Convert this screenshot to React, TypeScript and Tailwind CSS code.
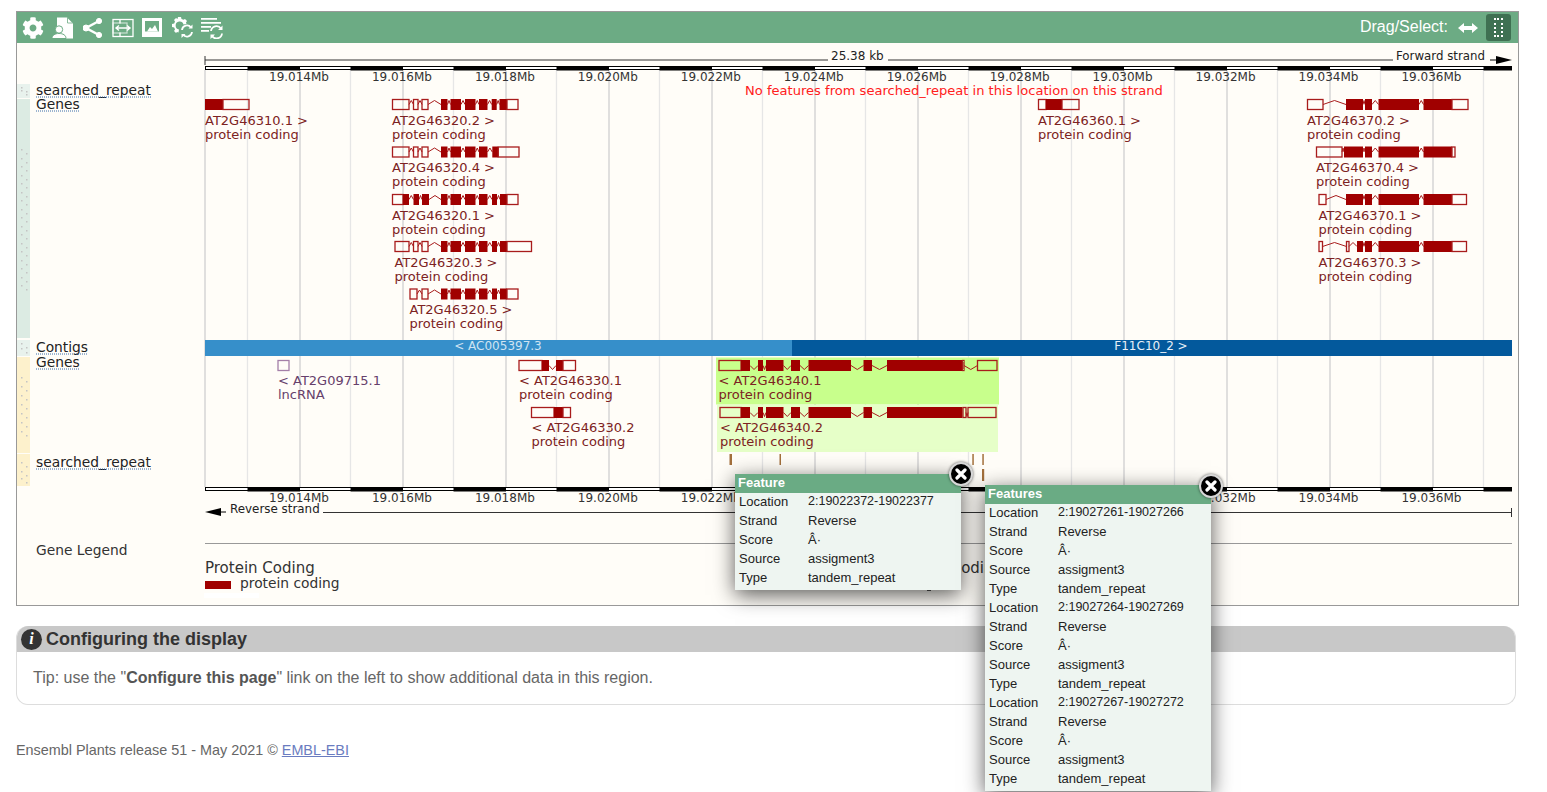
import { FaCog } from 'react-icons/fa'

type Exon = [number, number, 0 | 1]

type Gene = {
    y: number
    labelX: number
    name: string
    biotype: string
    exons: Exon[]
    reverse?: boolean
    color?: string
    stroke?: string
}

const tailF: Exon[] = [[441, 447.5, 1], [450.5, 461, 1], [465, 475.5, 1], [479, 487.5, 1]]
const tail370: Exon[] = [[1365, 1372, 1], [1378.5, 1419, 1], [1423.5, 1452, 1]]
const body340: Exon[] = [[741, 750, 1], [758, 763, 1], [766, 783.5, 1], [791, 800, 1], [808.5, 851, 1], [863.5, 872, 1], [887, 962.5, 1]]

const genes: Gene[] = [
    { y: 99.5, labelX: 205, name: 'AT2G46310.1 >', biotype: 'protein coding', exons: [[205, 223, 1], [223, 249, 0]] },
    { y: 99.5, labelX: 392, name: 'AT2G46320.2 >', biotype: 'protein coding', exons: [[392.5, 409, 0], [413.5, 418, 0], [422, 428, 0], ...tailF, [491.7, 496.7, 1], [499.5, 507, 1], [507, 518, 0]] },
    { y: 147, labelX: 392, name: 'AT2G46320.4 >', biotype: 'protein coding', exons: [[392.5, 409, 0], [413.5, 418, 0], [422, 428, 0], ...tailF, [492.3, 498.3, 1], [498.3, 519, 0]] },
    { y: 194.5, labelX: 392, name: 'AT2G46320.1 >', biotype: 'protein coding', exons: [[392.5, 403, 0], [403, 409, 1], [413.5, 419, 1], [422, 429, 1], ...tailF, [492, 497, 1], [500, 507, 1], [507, 518, 0]] },
    { y: 241.5, labelX: 394.5, name: 'AT2G46320.3 >', biotype: 'protein coding', exons: [[395, 409, 0], [413.5, 418, 0], [422, 428, 0], ...tailF, [492, 497, 1], [500, 507, 1], [507, 531.5, 0]] },
    { y: 289, labelX: 409.5, name: 'AT2G46320.5 >', biotype: 'protein coding', exons: [[410, 417, 0], [422, 428, 0], ...tailF, [492, 497, 1], [500, 507, 1], [507, 518, 0]] },
    { y: 99.5, labelX: 1038, name: 'AT2G46360.1 >', biotype: 'protein coding', exons: [[1038.5, 1046, 0], [1046, 1062, 1], [1062, 1079, 0]] },
    { y: 99.5, labelX: 1307, name: 'AT2G46370.2 >', biotype: 'protein coding', exons: [[1307.5, 1323, 0], [1346, 1363, 1], ...tail370, [1452, 1468, 0]] },
    { y: 147, labelX: 1316, name: 'AT2G46370.4 >', biotype: 'protein coding', exons: [[1316.5, 1342, 0], [1344, 1363, 1], ...tail370, [1452, 1455, 0]] },
    { y: 194.5, labelX: 1318.5, name: 'AT2G46370.1 >', biotype: 'protein coding', exons: [[1319, 1326, 0], [1346, 1363, 1], ...tail370, [1452, 1466.5, 0]] },
    { y: 241.5, labelX: 1318.5, name: 'AT2G46370.3 >', biotype: 'protein coding', exons: [[1319, 1322.5, 0], [1346.5, 1349, 0], [1357, 1363, 1], ...tail370, [1452, 1466.5, 0]] },
    { y: 360.5, labelX: 278, name: '< AT2G09715.1', biotype: 'lncRNA', reverse: true, color: '#66406b', stroke: '#a47fa8', exons: [[278, 289, 0]] },
    { y: 360.5, labelX: 519, name: '< AT2G46330.1', biotype: 'protein coding', reverse: true, exons: [[519, 542, 0], [542, 549, 1], [556, 563, 1], [563, 575.5, 0]] },
    { y: 407.5, labelX: 531.5, name: '< AT2G46330.2', biotype: 'protein coding', reverse: true, exons: [[531.5, 554, 0], [554, 563, 1], [563, 570.5, 0]] },
    { y: 360.5, labelX: 718.5, name: '< AT2G46340.1', biotype: 'protein coding', reverse: true, exons: [[719, 741, 0], ...body340, [962.5, 964, 0], [977.5, 997, 0]] },
    { y: 407.5, labelX: 720, name: '< AT2G46340.2', biotype: 'protein coding', reverse: true, exons: [[720, 741, 0], ...body340, [963, 966, 0], [968, 996, 0]] }
]

const ticks = Array.from({ length: 25 }, (_, i) => {
    const k = i - 1
    const x = 300 + 51.5 * k
    return { x: k % 2 === 0 ? x : x - 1, major: k % 2 === 0 }
})

const mbLabels = ['19.014Mb', '19.016Mb', '19.018Mb', '19.020Mb', '19.022Mb', '19.024Mb', '19.026Mb', '19.028Mb', '19.030Mb', '19.032Mb', '19.034Mb', '19.036Mb']

const trackLabels = [
    { text: 'searched_repeat', y: 95, width: 115 },
    { text: 'Genes', y: 109, width: 43 },
    { text: 'Contigs', y: 352, width: 52 },
    { text: 'Genes', y: 367, width: 43 },
    { text: 'searched_repeat', y: 467, width: 115 }
]

const handles = [
    { y: 84, h: 14, fill: '#e8f2ed', dots: [87, 90] },
    { y: 99, h: 239, fill: '#dcebe3', dots: [149, 158, 166, 175, 183, 192, 200, 209, 217, 226, 234, 243, 251, 260, 268, 277, 285] },
    { y: 340, h: 16, fill: '#e8f2ed', dots: [343, 348] },
    { y: 357, h: 96, fill: '#fdf1cc', dots: [377, 386, 395, 404, 413, 422, 431] },
    { y: 454, h: 32, fill: '#fdf1cc', dots: [462, 471, 478] }
]

const GeneGlyph = ({ gene }: { gene: Gene }) => {
    const stroke = gene.stroke ?? '#a81c1c'
    const textY = gene.reverse ? gene.y + 24 : gene.y + 25
    const introns = gene.exons.slice(1).map((exon, i) => {
        const from = gene.exons[i][1]
        const to = exon[0]
        if (to - from < 2) return null
        const mid = (from + to) / 2
        const apex = gene.reverse ? gene.y + 9 : gene.y + 1
        return <polyline key={i} points={`${from},${gene.y + 5} ${mid},${apex} ${to},${gene.y + 5}`} fill="none" stroke={stroke} strokeWidth="1" />
    })
    return (
        <g>
            {introns}
            {gene.exons.map(([a, b, solid], i) =>
                solid ? (
                    <rect key={i} x={a} y={gene.y - 0.5} width={b - a} height={11} fill="#a00000" />
                ) : (
                    <rect key={i} x={a} y={gene.y} width={b - a} height={10} fill="none" stroke={stroke} strokeWidth="1.3" />
                )
            )}
            <text x={gene.labelX} y={textY} fontSize="13" fill={gene.color ?? '#7c2222'}>{gene.name}</text>
            <text x={gene.labelX} y={textY + 14} fontSize="13" fill={gene.color ?? '#7c2222'}>{gene.biotype}</text>
        </g>
    )
}

const ScaleBar = ({ y }: { y: number }) => (
    <g>
        <rect x="205.5" y={y + 0.5} width="1306" height="3" fill="#fff" stroke="#000" strokeWidth="1" />
        {ticks.filter((t) => !t.major).map((t, i) => {
            const end = Math.min(t.x + 52.5, 1512)
            return <rect key={i} x={t.x} y={y} width={end - t.x} height="4.500" fill="#000" />
        })}
    </g>
)

const GenomeImage = () => (
    <svg viewBox="17 43 1501 562" width="1501" height="562" className="block" style={{ fontFamily: '"DejaVu Sans", sans-serif' }}>
        {handles.map((h) => (
            <g key={h.y}>
                <rect x="17" y={h.y} width="13" height={h.h} fill={h.fill} />
                {h.dots.map((d) => (
                    <g key={d}>
                        <rect x="21" y={d} width="1.500" height="1.500" fill="#c4c4c4" />
                        <rect x="26" y={d + 4} width="1.500" height="1.500" fill="#c4c4c4" />
                    </g>
                ))}
            </g>
        ))}

        {ticks.map((t) => (
            <line key={t.x} x1={t.x} x2={t.x} y1="70" y2="487" stroke={t.major ? '#cfcfcf' : '#e6e6e6'} strokeWidth="1.300" />
        ))}
        <line x1="205" x2="205" y1="70" y2="487" stroke="#cfcfcf" strokeWidth="1.300" />

        {/* top ruler */}
        <line x1="205" x2="828" y1="60" y2="60" stroke="#333" />
        <line x1="888" x2="1393" y1="60" y2="60" stroke="#333" />
        <line x1="205" x2="205" y1="56" y2="65" stroke="#333" />
        <text x="831" y="60" fontSize="12" fill="#222">25.38 kb</text>
        <text x="1396" y="60" fontSize="11.800" fill="#222">Forward strand</text>
        <line x1="1490" x2="1498" y1="60" y2="60" stroke="#000" />
        <polygon points="1496,56 1512,60 1496,64" fill="#000" />
        <ScaleBar y={66} />
        {mbLabels.map((label, i) => (
            <text key={i} x={269 + 102.95 * i} y="81" fontSize="12" fill="#333">{label}</text>
        ))}

        <text x="745" y="95" fontSize="13.070" fill="#ff2020">No features from searched_repeat in this location on this strand</text>

        {/* highlighted transcripts */}
        <rect x="716" y="357.500" width="283" height="47" fill="#c8ff8c" />
        <rect x="717" y="405" width="281" height="47" fill="#e6ffc8" />

        <rect x="205" y="340" width="587" height="16" fill="#368fca" />
        <rect x="792" y="340" width="720" height="16" fill="#03599c" />
        <text x="498" y="349.500" fontSize="12" fill="#cfe3f2" textAnchor="middle">{'< AC005397.3'}</text>
        <text x="1151" y="350" fontSize="12" fill="#e8f0f8" textAnchor="middle">{'F11C10_2 >'}</text>

        {genes.map((g) => <GeneGlyph key={g.name} gene={g} />)}

        {/* searched_repeat features */}
        <rect x="729.500" y="454" width="2.500" height="11" fill="#a3703c" />
        <rect x="779.500" y="454" width="1.500" height="11" fill="#a3703c" />
        <rect x="972.300" y="454" width="1.500" height="11" fill="#a3703c" />
        <rect x="982.300" y="454" width="1.500" height="11" fill="#a3703c" />
        <rect x="982" y="469" width="2.200" height="12" fill="#a3703c" />

        {/* bottom ruler */}
        <ScaleBar y={487} />
        {mbLabels.map((label, i) => (
            <text key={i} x={269 + 102.95 * i} y="502" fontSize="12" fill="#333">{label}</text>
        ))}
        <polygon points="205,512 221,508 221,516" fill="#000" />
        <line x1="219" x2="226" y1="512" y2="512" stroke="#000" />
        <text x="230" y="513" fontSize="11.900" fill="#222">Reverse strand</text>
        <line x1="323" x2="1512" y1="512.500" y2="512.500" stroke="#333" />
        <line x1="1511.500" x2="1511.500" y1="508" y2="517" stroke="#333" />

        {/* legend */}
        <text x="36" y="555" fontSize="13.800" fill="#333">Gene Legend</text>
        <line x1="205" x2="1512" y1="543.500" y2="543.500" stroke="#999" />
        <text x="205" y="573" fontSize="15" fill="#333">Protein Coding</text>
        <rect x="205" y="581" width="26" height="8" fill="#a00000" />
        <text x="240" y="588" fontSize="13.800" fill="#333">protein coding</text>
        <rect x="204" y="593" width="55" height="5" fill="#fff" />
        <text x="858" y="573" fontSize="15" fill="#333">Non-Protein Coding</text>
        <rect x="927" y="589" width="4" height="2" fill="#555" />

        {trackLabels.map((l) => (
            <g key={l.y}>
                <text x="36" y={l.y} fontSize="13.800" fill="#222">{l.text}</text>
                <line x1="36" x2={36 + l.width} y1={l.y + 2} y2={l.y + 2} stroke="#3b6ca8" strokeDasharray="1 1" />
            </g>
        ))}
    </svg>
)

const ToolbarIcons = () => (
    <div className="flex items-center h-full pl-[5px] text-white">
        <FaCog className="w-[22px] h-[22px]" />
        <svg viewBox="0 0 22 22" className="w-[22px] h-[22px] ml-[8px]" fill="white">
            <path d="M5 0.500h10l6 6v15H5z" />
            <path d="M15.500 1v5h5" fill="none" stroke="#6cab84" strokeWidth="0.800" />
            <circle cx="7" cy="12.500" r="3.700" stroke="#6cab84" strokeWidth="1" />
            <path d="M0 21.500c0-3.500 3-5 7-5s7 1.500 7 5z" stroke="#6cab84" strokeWidth="1" />
        </svg>
        <svg viewBox="0 0 20 20" className="w-[20px] h-[20px] ml-[9px]" fill="white" stroke="white">
            <path d="M16 3 3 10 16 17" fill="none" strokeWidth="2.500" />
            <circle cx="16" cy="3" r="2.600" />
            <circle cx="3" cy="10" r="3" />
            <circle cx="16" cy="17" r="2.600" />
        </svg>
        <svg viewBox="0 0 22 20" className="w-[22px] h-[20px] ml-[9px]" fill="none" stroke="white" strokeWidth="1.300">
            <rect x="1" y="1.500" width="20" height="17" />
            <rect x="1" y="5" width="14" height="10" opacity="0.600" />
            <path d="M8 1.500v4M8 14.500v4M4 10h14M7 7.500 4 10l3 2.500M15 7.500l3 2.500-3 2.500" strokeWidth="1.400" />
        </svg>
        <svg viewBox="0 0 20 19" className="w-[20px] h-[19px] ml-[8px]">
            <rect width="20" height="19" fill="white" />
            <rect x="3" y="3" width="14" height="10.500" fill="#6cab84" />
            <path d="M5 13.500 8 9l2 2 3-4 3 6.500z" fill="white" />
        </svg>
        <svg viewBox="0 0 22 22" className="w-[22px] h-[22px] ml-[9px]" fill="white">
            <path d="M7 0h3l.5 2 2 .8L14 2l2 2-1 1.500.5 1.500-3 .5a4 4 0 1 0-4.500 5l-.5 3-1.500-.5L5 16l-2-2 1-1.500L3.200 10.500 1 10V7l2.200-.5L4 4.500 3 3l2-2 1.500 1z" />
            <path d="M11 13a5 5 0 0 1 9-2.500M21 15a5 5 0 0 1-9 2.500" fill="none" stroke="white" strokeWidth="1.800" />
            <path d="M21.500 7.500v4h-4zM10.500 21v-4h4z" />
        </svg>
        <svg viewBox="0 0 22 22" className="w-[22px] h-[22px] ml-[8px]" fill="white">
            <path d="M0 1h16v1.800H0zM0 5h20v1.800H0zM0 9h10v1.800H0zM0 13h8v1.800H0z" />
            <path d="M10 14a5.500 5.500 0 0 1 10-2.500M21 16.500a5.500 5.500 0 0 1-10 2.500" fill="none" stroke="white" strokeWidth="1.800" />
            <path d="M21.500 8.500v4.500h-4.500zM9.500 22v-4.500H14z" />
        </svg>
    </div>
)

const CloseButton = ({ className }: { className: string }) => (
    <div className={`absolute w-[24px] h-[24px] rounded-full bg-black border-2 border-[#d8d8d8] shadow-[0_0_3px_rgba(0,0,0,0.6)] flex items-center justify-center ${className}`}>
        <svg viewBox="0 0 12 12" className="w-[12px] h-[12px]" stroke="white" strokeWidth="3.200" strokeLinecap="round">
            <path d="M2 2l8 8M10 2l-8 8" />
        </svg>
    </div>
)

const Row = ({ label, value, small }: { label: string; value: string; small?: boolean }) => (
    <div className="flex h-[19px] items-center text-[13px] text-[#222]">
        <span className="w-[73px] pl-[4px]">{label}</span>
        <span className={small ? 'text-[12.500px]' : ''}>{value}</span>
    </div>
)

type Feature = { location: string }

const Popup = ({ title, features, className, closeClass }: { title: string; features: Feature[]; className: string; closeClass: string }) => (
    <div className={`absolute w-[226px] bg-[#eef5f1] shadow-[0_5px_20px_rgba(0,0,0,0.65)] font-['Liberation_Sans',sans-serif] ${className}`}>
        <div className="h-[19px] bg-[#6aab84] pl-[3px] text-[13px] leading-[17px] font-bold text-white">{title}</div>
        <div className="-mt-[1px] pb-[3px]">
            {features.map((f) => (
                <div key={f.location}>
                    <Row label="Location" value={f.location} small />
                    <Row label="Strand" value="Reverse" />
                    <Row label="Score" value="Â·" />
                    <Row label="Source" value="assigment3" />
                    <Row label="Type" value="tandem_repeat" />
                </div>
            ))}
        </div>
        <CloseButton className={closeClass} />
    </div>
)

const App = () => {
    return (
        <div className="relative h-[792px] overflow-hidden bg-white pl-[16px] pt-[11px] font-['Liberation_Sans',sans-serif]">
            <div className="w-[1503px] h-[595px] border border-[#999] bg-[#fffdf8]">
                <div className="h-[31px] bg-[#6cab84] flex items-center justify-between pr-[7px]">
                    <ToolbarIcons />
                    <div className="flex items-center">
                        <span className="text-[16px] -mt-[1px] text-white">Drag/Select:</span>
                        <svg viewBox="0 0 20 10" className="w-[20px] h-[10px] ml-[10px]" fill="white">
                            <path d="M0 5l6-5v3h8V0l6 5-6 5V7H6v3z" />
                        </svg>
                        <div className="ml-[8px] w-[25px] h-[27px] rounded-[3px] bg-[#3f7052] flex items-center justify-center">
                            <div className="w-[9px] h-[19px] border-2 border-dotted border-white" />
                        </div>
                    </div>
                </div>
                <GenomeImage />
            </div>

            <div className="w-[1500px] mt-[20px] h-[79px] rounded-[12px] border border-[#ddd] border-t-0 overflow-hidden">
                <div className="h-[26px] bg-[#c8c8c8] flex items-center pl-[4px]">
                    <div className="w-[21px] h-[21px] rounded-full bg-[#333] flex items-center justify-center text-white font-bold italic text-[16px] font-['Liberation_Serif',serif]">i</div>
                    <h3 className="ml-[4px] text-[18px] font-bold text-[#333]">Configuring the display</h3>
                </div>
                <p className="pl-[16px] pt-[14px] text-[16px] text-[#666]">
                    Tip: use the "<b className="text-[#555]">Configure this page</b>" link on the left to show additional data in this region.
                </p>
            </div>

            <p className="mt-[35px] text-[14.400px] text-[#666]">
                Ensembl Plants release 51 - May 2021 © <a href="#" className="text-[#6a7cc0] underline">EMBL-EBI</a>
            </p>

            <Popup
                title="Feature"
                features={[{ location: '2:19022372-19022377' }]}
                className="left-[735px] top-[474px]"
                closeClass="-top-[12px] -right-[12px]"
            />
            <Popup
                title="Features"
                features={[{ location: '2:19027261-19027266' }, { location: '2:19027264-19027269' }, { location: '2:19027267-19027272' }]}
                className="left-[985px] top-[485px]"
                closeClass="-top-[11px] -right-[12px]"
            />
        </div>
    )
}

export default App
